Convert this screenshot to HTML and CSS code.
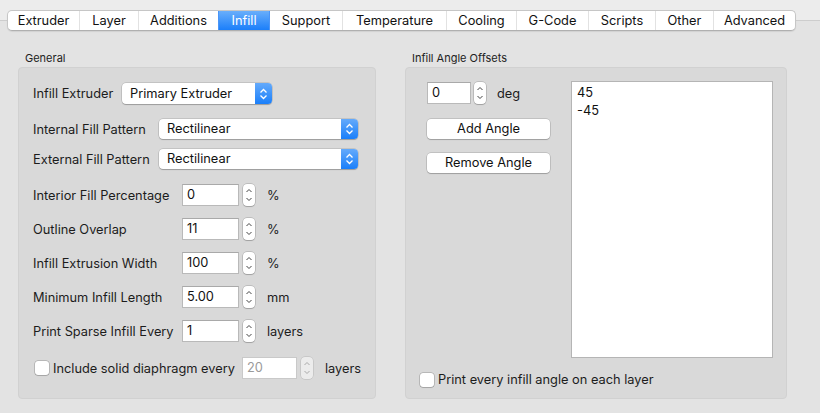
FILE: index.html
```html
<!DOCTYPE html>
<html>
<head>
<meta charset="utf-8">
<link rel="stylesheet" href="styles.css">
</head>
<body>
<div class="tabrow">
  <div class="tabs">
    <div class="tab w-extruder">Extruder</div>
    <div class="tab w-layer">Layer</div>
    <div class="tab w-additions">Additions</div>
    <div class="tab w-infill active">Infill</div>
    <div class="tab w-support">Support</div>
    <div class="tab w-temp">Temperature</div>
    <div class="tab w-cooling">Cooling</div>
    <div class="tab w-gcode">G-Code</div>
    <div class="tab w-scripts">Scripts</div>
    <div class="tab w-other">Other</div>
    <div class="tab w-advanced">Advanced</div>
  </div>
</div>

<div class="main">
  <section class="group group-general">
    <div class="group-title">General</div>
    <div class="box box-general">
      <div class="row row-extruder">
        <span class="label lab-extruder">Infill Extruder</span>
        <div class="popup popup-extruder"><span class="popup-text">Primary Extruder</span><span class="popup-arrow"><svg width="9" height="12" viewBox="0 0 9 12"><path d="M1.5 4.5 L4.5 1.5 L7.5 4.5 M1.5 7.5 L4.5 10.5 L7.5 7.5" fill="none" stroke="#fff" stroke-width="1.3"/></svg></span></div>
      </div>
      <div class="row row-internal">
        <span class="label lab-pattern">Internal Fill Pattern</span>
        <div class="popup popup-pattern"><span class="popup-text">Rectilinear</span><span class="popup-arrow"><svg width="9" height="12" viewBox="0 0 9 12"><path d="M1.5 4.5 L4.5 1.5 L7.5 4.5 M1.5 7.5 L4.5 10.5 L7.5 7.5" fill="none" stroke="#fff" stroke-width="1.3"/></svg></span></div>
      </div>
      <div class="row row-external">
        <span class="label lab-pattern">External Fill Pattern</span>
        <div class="popup popup-pattern"><span class="popup-text">Rectilinear</span><span class="popup-arrow"><svg width="9" height="12" viewBox="0 0 9 12"><path d="M1.5 4.5 L4.5 1.5 L7.5 4.5 M1.5 7.5 L4.5 10.5 L7.5 7.5" fill="none" stroke="#fff" stroke-width="1.3"/></svg></span></div>
      </div>
      <div class="row row-num first-num">
        <span class="label lab-num">Interior Fill Percentage</span>
        <div class="field">0</div>
        <div class="stepper"><svg width="12" height="22" viewBox="0 0 12 22"><path d="M3.5 8 L6 5.5 L8.5 8 M3.5 14 L6 16.5 L8.5 14" fill="none" stroke="#444" stroke-width="1"/></svg></div>
        <span class="unit">%</span>
      </div>
      <div class="row row-num">
        <span class="label lab-num">Outline Overlap</span>
        <div class="field">11</div>
        <div class="stepper"><svg width="12" height="22" viewBox="0 0 12 22"><path d="M3.5 8 L6 5.5 L8.5 8 M3.5 14 L6 16.5 L8.5 14" fill="none" stroke="#444" stroke-width="1"/></svg></div>
        <span class="unit">%</span>
      </div>
      <div class="row row-num">
        <span class="label lab-num">Infill Extrusion Width</span>
        <div class="field">100</div>
        <div class="stepper"><svg width="12" height="22" viewBox="0 0 12 22"><path d="M3.5 8 L6 5.5 L8.5 8 M3.5 14 L6 16.5 L8.5 14" fill="none" stroke="#444" stroke-width="1"/></svg></div>
        <span class="unit">%</span>
      </div>
      <div class="row row-num">
        <span class="label lab-num">Minimum Infill Length</span>
        <div class="field">5.00</div>
        <div class="stepper"><svg width="12" height="22" viewBox="0 0 12 22"><path d="M3.5 8 L6 5.5 L8.5 8 M3.5 14 L6 16.5 L8.5 14" fill="none" stroke="#444" stroke-width="1"/></svg></div>
        <span class="unit">mm</span>
      </div>
      <div class="row row-num">
        <span class="label lab-num">Print Sparse Infill Every</span>
        <div class="field">1</div>
        <div class="stepper"><svg width="12" height="22" viewBox="0 0 12 22"><path d="M3.5 8 L6 5.5 L8.5 8 M3.5 14 L6 16.5 L8.5 14" fill="none" stroke="#444" stroke-width="1"/></svg></div>
        <span class="unit">layers</span>
      </div>
      <div class="row row-diaphragm">
        <span class="checkbox"></span>
        <span class="label lab-check">Include solid diaphragm every</span>
        <div class="field field-disabled">20</div>
        <div class="stepper stepper-disabled"><svg width="12" height="22" viewBox="0 0 12 22"><path d="M3.5 8 L6 5.5 L8.5 8 M3.5 14 L6 16.5 L8.5 14" fill="none" stroke="#aaa" stroke-width="1"/></svg></div>
        <span class="unit unit-wide">layers</span>
      </div>
    </div>
  </section>

  <section class="group group-angles">
    <div class="group-title">Infill Angle Offsets</div>
    <div class="box box-angles">
      <div class="angles-top">
        <div class="angles-controls">
          <div class="row row-deg">
            <div class="field field-deg">0</div>
            <div class="stepper"><svg width="12" height="22" viewBox="0 0 12 22"><path d="M3.5 8 L6 5.5 L8.5 8 M3.5 14 L6 16.5 L8.5 14" fill="none" stroke="#444" stroke-width="1"/></svg></div>
            <span class="unit">deg</span>
          </div>
          <div class="button btn-add">Add Angle</div>
          <div class="button btn-remove">Remove Angle</div>
        </div>
        <div class="listbox">
          <div class="list-item">45</div>
          <div class="list-item">-45</div>
        </div>
      </div>
      <div class="row row-everylayer">
        <span class="checkbox"></span>
        <span class="label">Print every infill angle on each layer</span>
      </div>
    </div>
  </section>
</div>
</body>
</html>
```

FILE: styles.css
```css
* { box-sizing: border-box; }

html, body { margin: 0; padding: 0; }

body {
  width: 820px;
  height: 413px;
  overflow: hidden;
  font-family: Inter, "Liberation Sans", Arial, sans-serif;
  font-size: 12.8px;
  color: #1c1c1c;
  background: linear-gradient(to bottom, #ececec 0, #ececec 20px, #cdcdcd 20px, #cdcdcd 21px, #e3e3e3 21px);
}

.tabrow {
  padding-top: 10px;
  padding-left: 7px;
  height: 31px;
}

.tabs {
  display: inline-flex;
  height: 21px;
  background: #fff;
  border: 1px solid #c6c6c6;
  border-bottom-color: #b0b0b0;
  border-radius: 5px;
  box-shadow: 0 1px 1px rgba(0,0,0,0.08);
  overflow: hidden;
}

.tab {
  height: 19px;
  line-height: 19px;
  text-align: center;
  border-left: 1px solid #e2e2e2;
  color: #111;
}
.tab:first-child { border-left: none; }
.tab.active {
  background: linear-gradient(to bottom, #69aefb, #1b7ffa);
  color: #fff;
  border-left-color: #4a95f8;
}
.tab.active + .tab { border-left-color: #4a95f8; }

.w-extruder { width: 71px; }
.w-layer { width: 59px; }
.w-additions { width: 80px; }
.w-infill { width: 51px; }
.w-support { width: 73px; }
.w-temp { width: 104px; }
.w-cooling { width: 70px; }
.w-gcode { width: 72px; }
.w-scripts { width: 67px; }
.w-other { width: 58px; }
.w-advanced { width: 82px; }

.main {
  display: flex;
  padding-left: 18px;
  padding-top: 21px;
  gap: 29px;
}

.group-title {
  font-size: 11px;
  line-height: 13px;
  padding-left: 7px;
  height: 15px;
  color: #222;
}

.box {
  background: #d9d9d9;
  border: 1px solid #d1d1d1;
  border-radius: 4px;
  height: 332px;
}

.box-general { width: 358px; padding: 15px 0 0 14px; }
.box-angles { width: 382px; padding: 13px 0 0 21px; }

.row {
  display: flex;
  align-items: center;
}

.label { white-space: nowrap; }

.lab-extruder { width: 89px; }
.lab-pattern { width: 126px; }
.lab-num { width: 149px; }

.popup {
  display: flex;
  height: 21px;
  background: #fff;
  border-radius: 4px;
  box-shadow: 0 0 0 0.5px rgba(0,0,0,0.2), 0 1px 1px rgba(0,0,0,0.2);
  overflow: hidden;
}
.popup-text {
  flex: 1;
  padding-left: 8px;
  line-height: 21px;
  color: #111;
}
.popup-arrow {
  width: 17px;
  display: flex;
  align-items: center;
  justify-content: center;
  background: linear-gradient(to bottom, #64aafb, #1a7ffa);
}
.popup-extruder { width: 150px; }
.popup-pattern { width: 199px; height: 20px; }
.popup-pattern .popup-text { line-height: 20px; }

.row-internal { margin-top: 15px; }
.row-external { margin-top: 10px; }

.row-num { margin-top: 12px; height: 22px; }
.row-num.first-num { margin-top: 15px; }

.field {
  width: 57px;
  height: 22px;
  background: #fff;
  border: 1px solid #b9b9b9;
  border-top-color: #a9a9a9;
  padding-left: 4px;
  line-height: 20px;
  color: #111;
}

.stepper {
  width: 12px;
  height: 22px;
  margin-left: 4px;
  background: #fff;
  border-radius: 4px;
  box-shadow: 0 0 0 0.5px rgba(0,0,0,0.25), 0 1px 1px rgba(0,0,0,0.15);
}
.stepper svg { display: block; }

.unit { margin-left: 12px; }

.row-diaphragm { margin-top: 15px; height: 22px; }

.checkbox {
  width: 14px;
  height: 14px;
  background: #fff;
  border-radius: 3px;
  box-shadow: 0 0 0 0.5px rgba(0,0,0,0.3), 0 1px 1px rgba(0,0,0,0.1);
  margin-left: 2px;
  margin-right: 4px;
  flex: none;
}

.lab-check { width: 189px; }
.field-disabled { width: 55px; color: #9a9a9a; border-color: #c9c9c9; }
.stepper-disabled { background: #ececec; box-shadow: 0 0 0 0.5px rgba(0,0,0,0.15); }
.unit-wide { margin-left: 12px; }

.angles-top { display: flex; }
.angles-controls { width: 144px; }

.row-deg { height: 22px; margin-top: 1px; }
.field-deg { width: 44px; }
.row-deg .stepper { margin-left: 3px; }
.row-deg .unit { margin-left: 11px; }

.button {
  width: 123px;
  height: 20px;
  margin-top: 15px;
  background: #fff;
  border-radius: 4px;
  box-shadow: 0 0 0 0.5px rgba(0,0,0,0.22), 0 1px 1px rgba(0,0,0,0.18);
  text-align: center;
  line-height: 20px;
  color: #111;
}
.btn-remove { margin-top: 14px; }

.listbox {
  width: 202px;
  height: 277px;
  background: #fff;
  border: 1px solid #b5b5b5;
  padding: 2px 5px;
}
.list-item { line-height: 18px; color: #111; }

.row-everylayer { margin-top: 14px; margin-left: -7px; }
.row-everylayer .checkbox { margin-left: 0; margin-right: 4px; }
```
